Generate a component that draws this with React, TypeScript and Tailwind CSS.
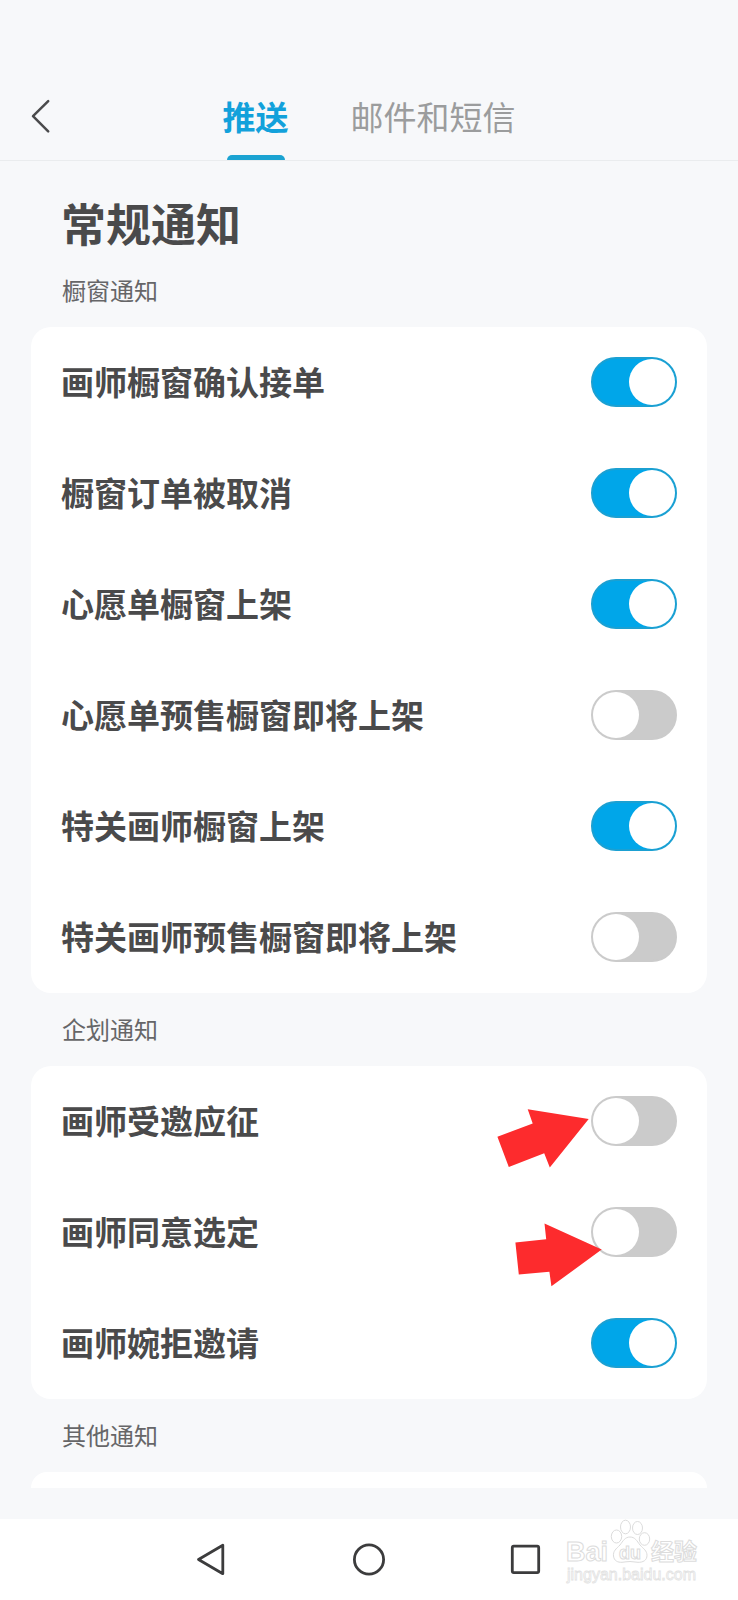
import { useState } from "react";

type Item = { id: string; label: string; on: boolean; arrow?: "up" | "flat" };
type Group = { title: string; items: Item[] };

const groups: Group[] = [
  {
    title: "橱窗通知",
    items: [
      { id: "confirm", label: "画师橱窗确认接单", on: true },
      { id: "cancel", label: "橱窗订单被取消", on: true },
      { id: "wish", label: "心愿单橱窗上架", on: true },
      { id: "wish-presale", label: "心愿单预售橱窗即将上架", on: false },
      { id: "follow", label: "特关画师橱窗上架", on: true },
      { id: "follow-presale", label: "特关画师预售橱窗即将上架", on: false },
    ],
  },
  {
    title: "企划通知",
    items: [
      { id: "apply", label: "画师受邀应征", on: false, arrow: "up" },
      { id: "agree", label: "画师同意选定", on: false, arrow: "flat" },
      { id: "refuse", label: "画师婉拒邀请", on: true },
    ],
  },
];

function Arrow({ kind }: { kind: "up" | "flat" }) {
  return (
    <svg
      aria-hidden="true"
      viewBox="0 0 110 90"
      className="pointer-events-none absolute top-0 right-full -mr-4 h-[90px] w-[110px]"
      fill="#fd2b2d"
    >
      {kind === "up" ? (
        <path d="M30.7 13.3 91.7 23 52.8 71.5 47.2 57.2 11.8 71 0.4 40.8 35.7 27.5Z" />
      ) : (
        <path d="M47.5 16.5 104.7 42.6 54.4 79.3 52.4 64.8 21.8 67.5 18.4 35.4 49.2 32.3Z" />
      )}
    </svg>
  );
}

function Row({ item }: { item: Item }) {
  const [on, setOn] = useState(item.on);
  return (
    <li className="flex items-start justify-between px-[30px] pt-[30px] pb-[31px]">
      <label htmlFor={item.id} className="text-[33px] leading-[48px] font-bold text-[#4a4a4b]">
        {item.label}
      </label>
      <div className="relative flex">
        <input
          id={item.id}
          type="checkbox"
          role="switch"
          checked={on}
          onChange={(e) => setOn(e.target.checked)}
          className="flex h-[50px] w-[86px] cursor-pointer appearance-none items-center rounded-full border-2 border-[#cbcbcb] bg-[#cbcbcb] before:size-[46px] before:rounded-full before:bg-white checked:justify-end checked:border-[#1ba0d2] checked:bg-[#00a6e9]"
        />
        {item.arrow && <Arrow kind={item.arrow} />}
      </div>
    </li>
  );
}

function SectionTitle({ children }: { children: string }) {
  return <h2 className="px-[31px] pt-[15px] pb-[17px] text-2xl leading-[41px] text-[#666668]">{children}</h2>;
}

function Watermark() {
  return (
    <svg
      aria-hidden="true"
      viewBox="0 0 142 70"
      className="pointer-events-none absolute right-9 bottom-[14px] h-[70px] w-[142px]"
      fill="#ffffff"
      stroke="#dcdcdc"
      strokeWidth="1"
    >
      <text x="6" y="45" fontFamily="Liberation Sans, sans-serif" fontWeight="700" fontSize="27">
        Bai
      </text>
      <ellipse cx="56.500" cy="20.500" rx="5.200" ry="6.500" />
      <ellipse cx="65.500" cy="11" rx="5" ry="6.800" />
      <ellipse cx="77.500" cy="12" rx="5" ry="6.500" />
      <ellipse cx="84.500" cy="23" rx="5.200" ry="6.300" />
      <path d="M70 21c-5 0-7 4-10 8-4 4-7 6-6.500 11 .5 5 4.500 6.500 8.500 6.300 3-.2 5-.8 8-.8s5 .8 8 .8c5 .2 9-2 9-7 0-4.500-3.500-6.500-7-10.300-3-4-5-8-10-8Z" />
      <text x="59" y="43" fontFamily="Liberation Sans, sans-serif" fontWeight="700" fontSize="18">
        du
      </text>
      <text x="91" y="44" fontFamily="Noto Sans CJK SC, sans-serif" fontWeight="700" fontSize="23">
        经验
      </text>
      <text
        x="7"
        y="64"
        fontFamily="Liberation Sans, sans-serif"
        fontSize="16"
        strokeWidth="0.8"
        stroke="#e2e2e2"
      >
        jingyan.baidu.com
      </text>
    </svg>
  );
}

export default function App() {
  return (
    <div className="flex min-h-screen flex-col bg-[#f7f8fa] font-['Noto_Sans_CJK_SC',sans-serif]">
      <header className="grid grid-cols-[1fr_auto_1fr] border-b border-[#eaecee] pt-[76px]">
        <button type="button" aria-label="返回" className="ml-[30px] flex h-20 w-6 items-center">
          <svg viewBox="0 0 22 36" className="h-9 w-[22px]" fill="none" stroke="#4a4a4c" strokeWidth="2.500" strokeLinecap="round" strokeLinejoin="round">
            <path d="M18.200 3.200 3 18.200l15.200 15.200" />
          </svg>
        </button>
        <nav className="flex gap-[62px] text-[33px] leading-[48px]">
          <button type="button" aria-current="page" className="flex flex-col items-center gap-[15px] pt-4 font-bold text-[#12a1db]">
            推送
            <span className="h-[5px] w-[58px] rounded-t-full bg-[#1ba3d2]" />
          </button>
          <button type="button" className="flex flex-col pt-4 text-[#9b9c9d]">
            邮件和短信
          </button>
        </nav>
      </header>

      <main className="flex grow flex-col px-[31px] pb-[31px]">
        <h1 className="px-[30px] pt-[33px] pb-[2px] text-[45px] leading-[58px] font-bold text-[#4a4a4b]">常规通知</h1>
        {groups.map((group) => (
          <section key={group.title}>
            <SectionTitle>{group.title}</SectionTitle>
            <ul className="rounded-[20px] bg-white">
              {group.items.map((item) => (
                <Row key={item.id} item={item} />
              ))}
            </ul>
          </section>
        ))}
        <section>
          <SectionTitle>其他通知</SectionTitle>
          <div className="rounded-t-[20px] bg-white pt-4" />
        </section>
      </main>

      <footer className="relative flex items-center justify-center gap-[125px] bg-white py-6">
        <button type="button" aria-label="后退">
          <svg viewBox="0 0 32 33" className="h-[33px] w-8" fill="none" stroke="#3c3c3d" strokeWidth="2.800" strokeLinejoin="round">
            <path d="M2.500 16.500 26.800 2.300V30.700Z" />
          </svg>
        </button>
        <button type="button" aria-label="主页">
          <svg viewBox="0 0 32 33" className="h-[33px] w-8" fill="none" stroke="#3c3c3d" strokeWidth="2.800">
            <circle cx="16" cy="16.500" r="14.600" />
          </svg>
        </button>
        <button type="button" aria-label="最近任务">
          <svg viewBox="0 0 32 33" className="h-[33px] w-8" fill="none" stroke="#3c3c3d" strokeWidth="2.800">
            <rect x="2.300" y="3.200" width="26.400" height="26.400" rx="1.500" />
          </svg>
        </button>
        <Watermark />
      </footer>
    </div>
  );
}
